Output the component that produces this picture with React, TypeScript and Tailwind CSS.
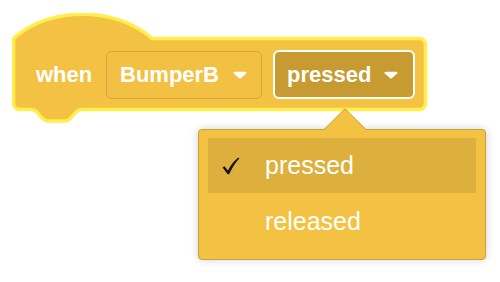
import React from 'react';

const font = { fontFamily: '"Liberation Sans", Arial, Helvetica, sans-serif' };

function Caret() {
  return (
    <svg width="14" height="8" viewBox="0 0 14 8" className="shrink-0">
      <path d="M1.5 0.8 H12.5 C13.4 0.8 13.8 1.8 13.2 2.4 L7.8 7.2 C7.3 7.6 6.7 7.6 6.2 7.2 L0.8 2.4 C0.2 1.8 0.6 0.8 1.5 0.8 Z" fill="#ffffff" />
    </svg>
  );
}

function Check() {
  return (
    <svg width="18" height="18" viewBox="0 0 18 18">
      <path
        d="M0.6 10.4 L2.4 9.2 L5.9 13.4 C8.8 8.2 12.4 3.6 16.4 0.6 L17.4 1.6 C13.6 5.4 10.2 10.6 7.2 17.2 L5.6 17.2 Z"
        fill="#161616"
      />
    </svg>
  );
}

function HatShape() {
  return (
    <svg width="416" height="112" viewBox="12 13 416 112" className="absolute inset-0">
      <path
        d="M13.5 38.5 C50 6 115 6 152 38.5 H419.5 A6 6 0 0 1 425.5 44.5 V103.5 A6 6 0 0 1 419.5 109.5 H82 C79 109.5 77.5 110.5 76 112 L71 118 C69.5 119.5 68 121 65 121 H48 C45 121 43.5 119.5 42 118 L37 112 C35.5 110.5 34 109.5 31 109.5 H19.5 A6 6 0 0 1 13.5 103.5 Z"
        fill="#F4C243"
        stroke="#FFEE4B"
        strokeWidth="3.5"
        strokeLinejoin="round"
      />
    </svg>
  );
}

export default function App() {
  return (
    <div className="relative w-[500px] h-[282px] bg-white overflow-hidden" style={font}>
      {/* Hat block */}
      <div className="relative ml-[12px] mt-[13px] w-[416px] h-[112px]">
        <HatShape />
        <div className="relative flex items-center pl-[24px] pt-[37px]">
          <span className="w-[70px] text-white font-bold text-[22px] leading-[22px]">when</span>
          <div className="flex items-center justify-between w-[156px] h-[48px] pl-[13px] pr-[14px] rounded-[6px] border border-[#D4A636] bg-[#F2C143]">
            <span className="text-white font-bold text-[22px] leading-[22px]">BumperB</span>
            <Caret />
          </div>
          <div className="ml-[11px] flex items-center justify-between w-[142px] h-[49px] pl-[12px] pr-[15px] rounded-[6px] border-2 border-white bg-[#C79B31]">
            <span className="text-white font-bold text-[22px] leading-[22px]">pressed</span>
            <Caret />
          </div>
        </div>
      </div>

      {/* Dropdown menu */}
      <div className="absolute left-[198px] top-[129px] w-[288px] h-[131px] rounded-[4px] border border-[#C9A03A] bg-[#F4C242] shadow-[0_0_8px_rgba(0,0,0,0.18)]">
        <div className="absolute left-[131px] top-[-16px] w-[30px] h-[30px] rotate-45 rounded-tl-[3px] border-t border-l border-[#C9A03A] bg-[#F4C242]" />
        <div className="relative flex flex-col pt-[8px] px-[9px]">
          <div className="flex items-center h-[55px] bg-[#DDAF3C]">
            <span className="flex w-[57px] pl-[14px] pt-[1px]">
              <Check />
            </span>
            <span className="text-white text-[25px] leading-none">pressed</span>
          </div>
          <div className="flex items-center h-[56px]">
            <span className="w-[57px]" />
            <span className="text-white text-[25px] leading-none">released</span>
          </div>
        </div>
      </div>
    </div>
  );
}
